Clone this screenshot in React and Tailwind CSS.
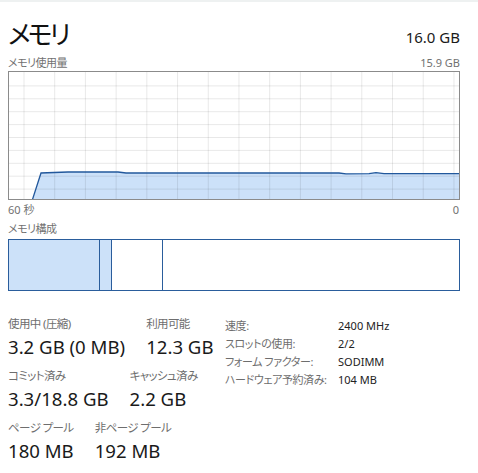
import React from 'react';

// usage graph, drawn in pixel units of its box
const GRAPH_W = 452;
const GRAPH_H = 129;
const usage = [
  [23, 129], [32, 101], [59, 100], [109, 100], [117, 101], [330, 101],
  [337, 101.8], [360, 101.6], [367, 100.6], [375, 101.6], [452, 101.6],
];

const UsageGraph = () => {
  const vLines = [...Array(15)].map((_, i) => 15 + i * 30.71);
  const hLines = [...Array(9)].map((_, i) => 1 + (i + 1) * 12.9);
  const line = usage.map(([x, y]) => `${x},${y}`).join(' ');
  const area = `${line} ${GRAPH_W},${GRAPH_H} 23,${GRAPH_H}`;

  return (
    <div className="h-[129px] w-[452px] border border-[#8b8b8b] bg-white">
      <svg width="100%" height="100%" viewBox={`0 0 ${GRAPH_W - 2} ${GRAPH_H - 2}`} preserveAspectRatio="none">
        <polygon points={area} fill="#cce1f9" />
        {vLines.map((x) => (
          <line key={x} x1={x} y1="0" x2={x} y2={GRAPH_H} stroke="rgba(0,0,0,0.09)" strokeWidth="1" />
        ))}
        {hLines.map((y) => (
          <line key={y} x1="0" y1={y} x2={GRAPH_W} y2={y} stroke="rgba(0,0,0,0.09)" strokeWidth="1" />
        ))}
        <polyline points={line} fill="none" stroke="#22589c" strokeWidth="1.3" />
      </svg>
    </div>
  );
};

const Stat = ({ label, value }) => (
  <div className="flex flex-col">
    <span className="text-[11.5px] leading-[16px] tracking-[-0.6px] text-[#6e6e6e] whitespace-nowrap">{label}</span>
    <span className="text-[18.6px] leading-[24px] text-[#1a1a1a] whitespace-nowrap mt-[3px]">{value}</span>
  </div>
);

const details = [
  ['速度:', '2400 MHz'],
  ['スロットの使用:', '2/2'],
  ['フォーム ファクター:', 'SODIMM'],
  ['ハードウェア予約済み:', '104 MB'],
];

export default function App() {
  return (
    <div className="w-[478px] h-[473px] bg-white border-t-2 border-[#eef1f1] overflow-hidden font-['Noto_Sans','Noto_Sans_CJK_JP',sans-serif] [font-feature-settings:'palt']">
      <div className="pl-2 w-[460px]">
        <div className="flex justify-between items-end h-[48px]">
          <span className="text-[26px] leading-[32px] tracking-[-3px] text-[#111]">メモリ</span>
          <span className="text-[15px] leading-[22px] text-[#1a1a1a] pb-[2px]">16.0 GB</span>
        </div>
        <div className="flex justify-between text-[11px] leading-[14px] text-[#717171] mt-[6px] mb-[1px]">
          <span className="tracking-[-0.5px]">メモリ使用量</span>
          <span>15.9 GB</span>
        </div>
        <UsageGraph />
        <div className="flex justify-between text-[11px] leading-[14px] text-[#717171] mt-[3px]">
          <span>60 秒</span>
          <span className="pr-[1px]">0</span>
        </div>
        <div className="text-[11px] leading-[14px] tracking-[-0.5px] text-[#717171] mt-[5px] mb-[3px]">メモリ構成</div>
        <div className="flex h-[52px] w-[452px] border border-[#2a5d9c]">
          <div className="w-[91px] bg-[#cce1f9] border-r border-[#2a5d9c]" />
          <div className="w-[12px] bg-[#cce1f9] border-r border-[#2a5d9c]" />
          <div className="w-[51px] border-r border-[#2a5d9c]" />
          <div className="flex-1" />
        </div>

        <div className="flex mt-[25px]">
          <div className="w-[217px] flex flex-col gap-[9px]">
            <div className="flex gap-[21px]">
              <Stat label="使用中 (圧縮)" value="3.2 GB (0 MB)" />
              <Stat label="利用可能" value="12.3 GB" />
            </div>
            <div className="flex gap-[21px]">
              <Stat label="コミット済み" value="3.3/18.8 GB" />
              <Stat label="キャッシュ済み" value="2.2 GB" />
            </div>
            <div className="flex gap-[21px]">
              <Stat label="ページ プール" value="180 MB" />
              <Stat label="非ページ プール" value="192 MB" />
            </div>
          </div>
          <div className="flex flex-col pt-[1px]">
            {details.map(([k, v]) => (
              <div key={k} className="flex text-[11px] leading-[18px]">
                <span className="w-[113px] tracking-[-0.4px] text-[#6e6e6e] whitespace-nowrap">{k}</span>
                <span className="text-[#222]">{v}</span>
              </div>
            ))}
          </div>
        </div>
      </div>
    </div>
  );
}
